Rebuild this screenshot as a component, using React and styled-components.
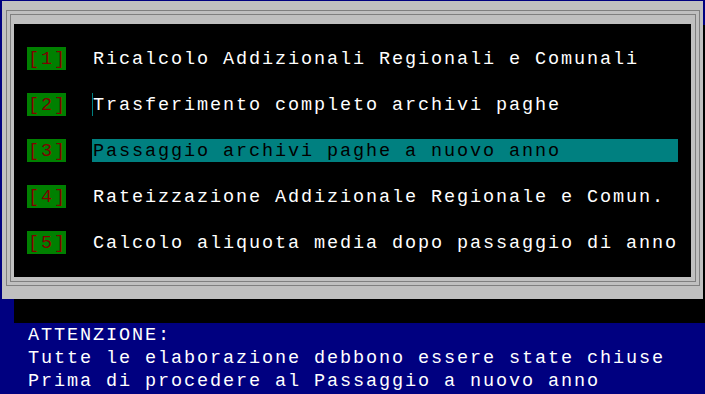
import React from "react";
import styled, { createGlobalStyle } from "styled-components";

const GlobalStyle = createGlobalStyle`
  html, body {
    margin: 0;
    padding: 0;
    background: #000080;
    overflow: hidden;
  }
  body {
    font-family: "Liberation Mono", "Courier New", monospace;
  }
`;

const Screen = styled.div`
  width: 705px;
  height: 394px;
  background: #000080;
  overflow: hidden;
  font-family: "Liberation Mono", "Courier New", monospace;
  font-size: 18.5px;
  letter-spacing: 1.9px;
  line-height: 23px;
  white-space: pre;
`;

const DialogArea = styled.div`
  padding: 1px 2px 0 2px;
`;

const Dialog = styled.div`
  width: 701px;
  height: 298px;
  box-sizing: border-box;
  background: #c0c0c0;
  box-shadow: 12px 24px 0 0 #000;
  padding: 9px 3px 13px 4px;
  display: flex;
`;

const OuterFrame = styled.div`
  flex: 1;
  border: 1px solid #808080;
  padding: 3px;
  display: flex;
`;

const InnerFrame = styled.div`
  flex: 1;
  border: 1px solid #808080;
  padding: 9px 4px 4px 3px;
  display: flex;
`;

const Menu = styled.div`
  flex: 1;
  background: #000;
  padding: 23px 0 23px 13px;
  display: flex;
  flex-direction: column;
  gap: 23px;
`;

const Item = styled.div`
  display: flex;
  align-items: stretch;
  height: 23px;
  gap: 26px;
`;

const Badge = styled.span`
  box-sizing: border-box;
  width: 39px;
  height: 23px;
  padding: 1px 0 0 1px;
  background: #008000;
  color: #800000;
`;

const Label = styled.span`
  box-sizing: border-box;
  width: 586px;
  height: 23px;
  padding: 1px 0 0 1px;
  color: ${(p) => (p.$active ? "#000" : "#fff")};
  background: ${(p) => (p.$active ? "#008080" : "transparent")};
  box-shadow: ${(p) => (p.$caret ? "inset 1px 0 0 #008080" : "none")};
`;

const Message = styled.div`
  margin-top: 24px;
  padding: 1px 0 0 28px;
  color: #fff;
  display: flex;
  flex-direction: column;
`;

const items = [
  { key: "1", text: "Ricalcolo Addizionali Regionali e Comunali" },
  { key: "2", text: "Trasferimento completo archivi paghe", caret: true },
  { key: "3", text: "Passaggio archivi paghe a nuovo anno", active: true },
  { key: "4", text: "Rateizzazione Addizionale Regionale e Comun." },
  { key: "5", text: "Calcolo aliquota media dopo passaggio di anno" },
];

export default function App() {
  return (
    <>
      <GlobalStyle />
      <Screen>
        <DialogArea>
          <Dialog>
            <OuterFrame>
              <InnerFrame>
                <Menu>
                  {items.map((it) => (
                    <Item key={it.key}>
                      <Badge>[{it.key}]</Badge>
                      <Label $active={it.active} $caret={it.caret}>
                        {it.text}
                      </Label>
                    </Item>
                  ))}
                </Menu>
              </InnerFrame>
            </OuterFrame>
          </Dialog>
        </DialogArea>
        <Message>
          <span>ATTENZIONE:</span>
          <span>Tutte le elaborazione debbono essere state chiuse</span>
          <span>Prima di procedere al Passaggio a nuovo anno</span>
        </Message>
      </Screen>
    </>
  );
}
